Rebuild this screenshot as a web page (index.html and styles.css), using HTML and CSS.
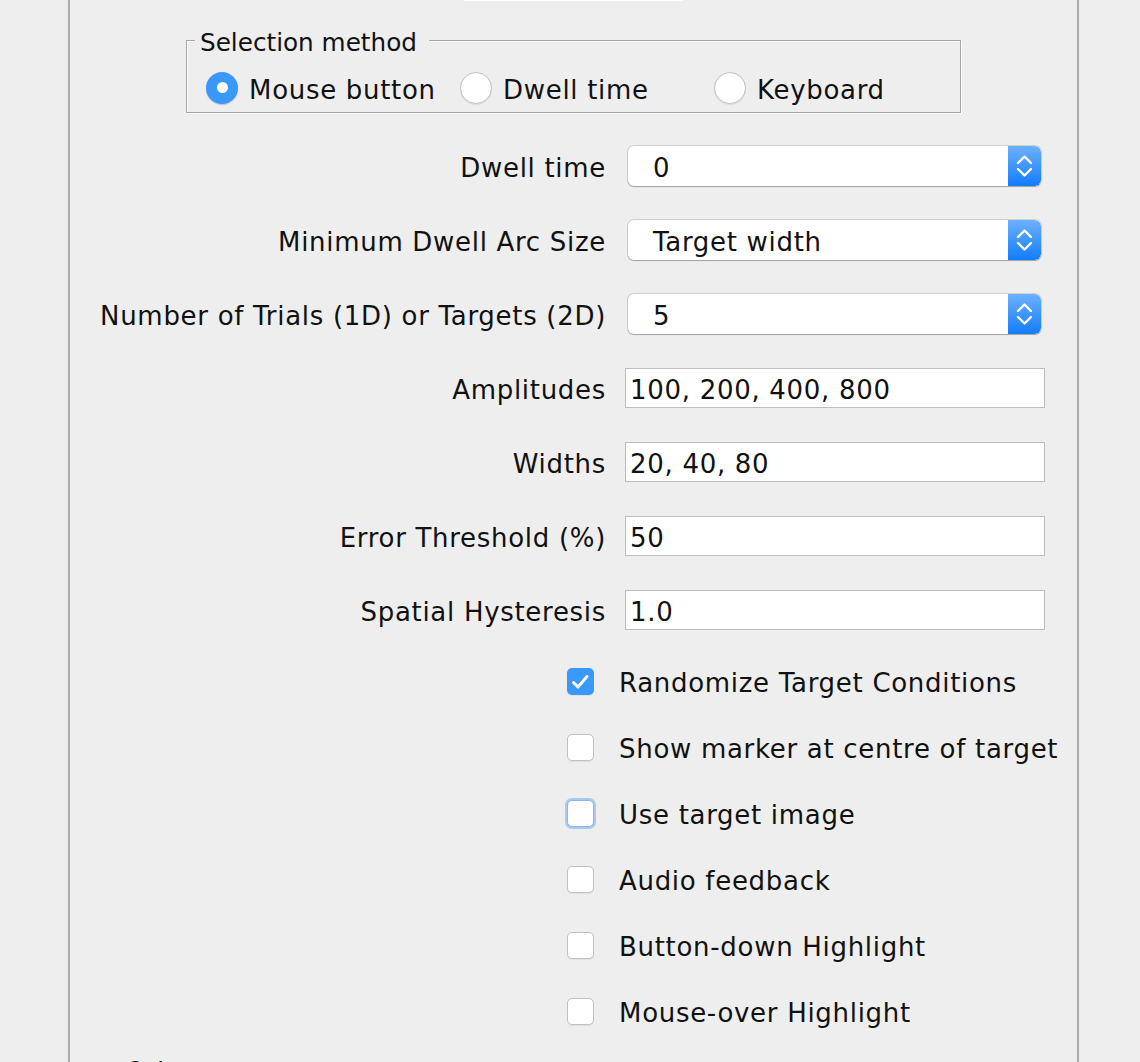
FILE: index.html
```html
<!DOCTYPE html>
<html>
<head>
<meta charset="utf-8">
<link rel="stylesheet" href="styles.css">
</head>
<body>
<div class="screen">
  <div class="panel">
    <div class="tabline"></div>

    <div class="group">
      <span class="group-title">Selection method</span>
      <div class="opt"><span class="radio on"></span><span class="txt">Mouse button</span></div>
      <div class="opt"><span class="radio"></span><span class="txt">Dwell time</span></div>
      <div class="opt"><span class="radio"></span><span class="txt">Keyboard</span></div>
    </div>

    <div class="form">
      <label class="lbl">Dwell time</label>
      <div class="select"><span class="sel-text">0</span><span class="sel-btn"><svg viewBox="0 0 33 40" width="33" height="40"><polyline points="10,17 16.5,10.5 23,17"/><polyline points="10,23 16.5,29.5 23,23"/></svg></span></div>

      <label class="lbl">Minimum Dwell Arc Size</label>
      <div class="select"><span class="sel-text">Target width</span><span class="sel-btn"><svg viewBox="0 0 33 40" width="33" height="40"><polyline points="10,17 16.5,10.5 23,17"/><polyline points="10,23 16.5,29.5 23,23"/></svg></span></div>

      <label class="lbl">Number of Trials (1D) or Targets (2D)</label>
      <div class="select"><span class="sel-text">5</span><span class="sel-btn"><svg viewBox="0 0 33 40" width="33" height="40"><polyline points="10,17 16.5,10.5 23,17"/><polyline points="10,23 16.5,29.5 23,23"/></svg></span></div>

      <label class="lbl">Amplitudes</label>
      <div class="field">100, 200, 400, 800</div>

      <label class="lbl">Widths</label>
      <div class="field">20, 40, 80</div>

      <label class="lbl">Error Threshold (%)</label>
      <div class="field">50</div>

      <label class="lbl">Spatial Hysteresis</label>
      <div class="field">1.0</div>
    </div>

    <div class="checks">
      <div class="check-row"><span class="cb on"><svg viewBox="0 0 27 27" width="27" height="27"><polyline points="6.5,14.5 11,19 20,8.5"/></svg></span><span class="txt">Randomize Target Conditions</span></div>
      <div class="check-row"><span class="cb"></span><span class="txt">Show marker at centre of target</span></div>
      <div class="check-row"><span class="cb focus"></span><span class="txt">Use target image</span></div>
      <div class="check-row"><span class="cb"></span><span class="txt">Audio feedback</span></div>
      <div class="check-row"><span class="cb"></span><span class="txt">Button-down Highlight</span></div>
      <div class="check-row"><span class="cb"></span><span class="txt">Mouse-over Highlight</span></div>
    </div>

    <div class="next-title">Other</div>
  </div>
</div>
</body>
</html>
```

FILE: styles.css
```css
html, body {
  margin: 0;
  padding: 0;
  background: #eeeeee;
}

body {
  font-family: "DejaVu Sans", "Noto Sans", sans-serif;
  font-size: 26px;
  letter-spacing: 0.7px;
  color: #111111;
}

.screen {
  width: 1140px;
  height: 1062px;
  overflow: hidden;
}

.panel {
  margin-left: 68px;
  width: 1007px;
  height: 1140px;
  border-left: 2px solid #ababab;
  border-right: 2px solid #ababab;
}

.tabline {
  margin-left: 394px;
  width: 219px;
  height: 1px;
  background: #ffffff;
}

.txt {
  padding-top: 4px;
  line-height: 32px;
}

/* group box */
.group {
  position: relative;
  margin-top: 39px;
  margin-left: 116px;
  width: 775px;
  height: 73px;
  box-sizing: border-box;
  border: 1px solid #a6a6a6;
  box-shadow: inset 1px 1px 0 #ffffff, 1px 1px 0 #ffffff;
  display: flex;
  align-items: flex-start;
  padding-left: 19px;
}

.group-title {
  position: absolute;
  left: 8px;
  top: -13px;
  padding: 0 12px 0 5px;
  font-size: 24.7px;
  letter-spacing: 0;
  line-height: 30px;
  background: #eeeeee;
}

.opt {
  flex: none;
  width: 254px;
  margin-top: 31px;
  height: 32px;
  display: flex;
  align-items: center;
  gap: 11px;
  white-space: nowrap;
}

.opt:last-child {
  width: auto;
}

.radio {
  flex: none;
  width: 32px;
  height: 32px;
  border-radius: 50%;
  box-sizing: border-box;
  background: #ffffff;
  border: 1px solid #c2c2c2;
  box-shadow: 0 1px 1px rgba(0, 0, 0, 0.08);
  position: relative;
}

.radio.on {
  background: #3b98fb;
  border: none;
  box-shadow: 0 1px 1px rgba(0, 60, 160, 0.25);
}

.radio.on::after {
  content: "";
  position: absolute;
  left: 11px;
  top: 10px;
  width: 11px;
  height: 11px;
  border-radius: 50%;
  background: #ffffff;
}

/* form grid */
.form {
  margin-top: 33px;
  display: grid;
  grid-template-columns: 536px 420px;
  column-gap: 19px;
  row-gap: 34px;
  grid-auto-rows: 40px;
}

.lbl {
  justify-self: end;
  align-self: center;
  padding-top: 4px;
  line-height: 32px;
  white-space: nowrap;
}

.select {
  margin-left: 3px;
  width: 413px;
  height: 40px;
  box-sizing: border-box;
  background: #ffffff;
  border-radius: 6px;
  box-shadow: 0 0 0 1px rgba(0, 0, 0, 0.13), 0 1px 1px rgba(0, 0, 0, 0.22);
  display: flex;
  align-items: center;
  overflow: hidden;
}

.sel-text {
  flex: 1;
  padding-left: 25px;
  padding-top: 4px;
  line-height: 32px;
}

.sel-btn {
  flex: none;
  width: 33px;
  height: 40px;
  background: linear-gradient(#6db1ff, #127cfd);
  border-radius: 0 6px 6px 0;
  display: block;
}

.sel-btn svg {
  display: block;
}

.sel-btn polyline {
  fill: none;
  stroke: #ffffff;
  stroke-width: 2.4;
  stroke-linecap: round;
  stroke-linejoin: round;
}

.field {
  width: 420px;
  height: 40px;
  box-sizing: border-box;
  background: #ffffff;
  border: 1px solid #bdbdbd;
  padding-left: 4px;
  padding-top: 4px;
  line-height: 34px;
  white-space: nowrap;
}

/* checkboxes */
.checks {
  margin-top: 31px;
  margin-left: 497px;
  display: flex;
  flex-direction: column;
  gap: 26px;
}

.check-row {
  height: 40px;
  display: flex;
  align-items: center;
  gap: 25px;
  white-space: nowrap;
}

.cb {
  flex: none;
  width: 27px;
  height: 27px;
  box-sizing: border-box;
  border-radius: 5px;
  background: #ffffff;
  border: 1px solid #c0c0c0;
  box-shadow: 0 1px 1px rgba(0, 0, 0, 0.06);
}

.cb svg {
  display: block;
}

.cb.on {
  background: #3b98fb;
  border: none;
}

.cb.on polyline {
  fill: none;
  stroke: #ffffff;
  stroke-width: 3;
  stroke-linecap: round;
  stroke-linejoin: round;
}

.cb.focus {
  border: 1px solid #8ab6ee;
  box-shadow: 0 0 0 2px rgba(120, 170, 240, 0.55);
}

.next-title {
  margin-top: 25px;
  margin-left: 55px;
  line-height: 32px;
}
```
